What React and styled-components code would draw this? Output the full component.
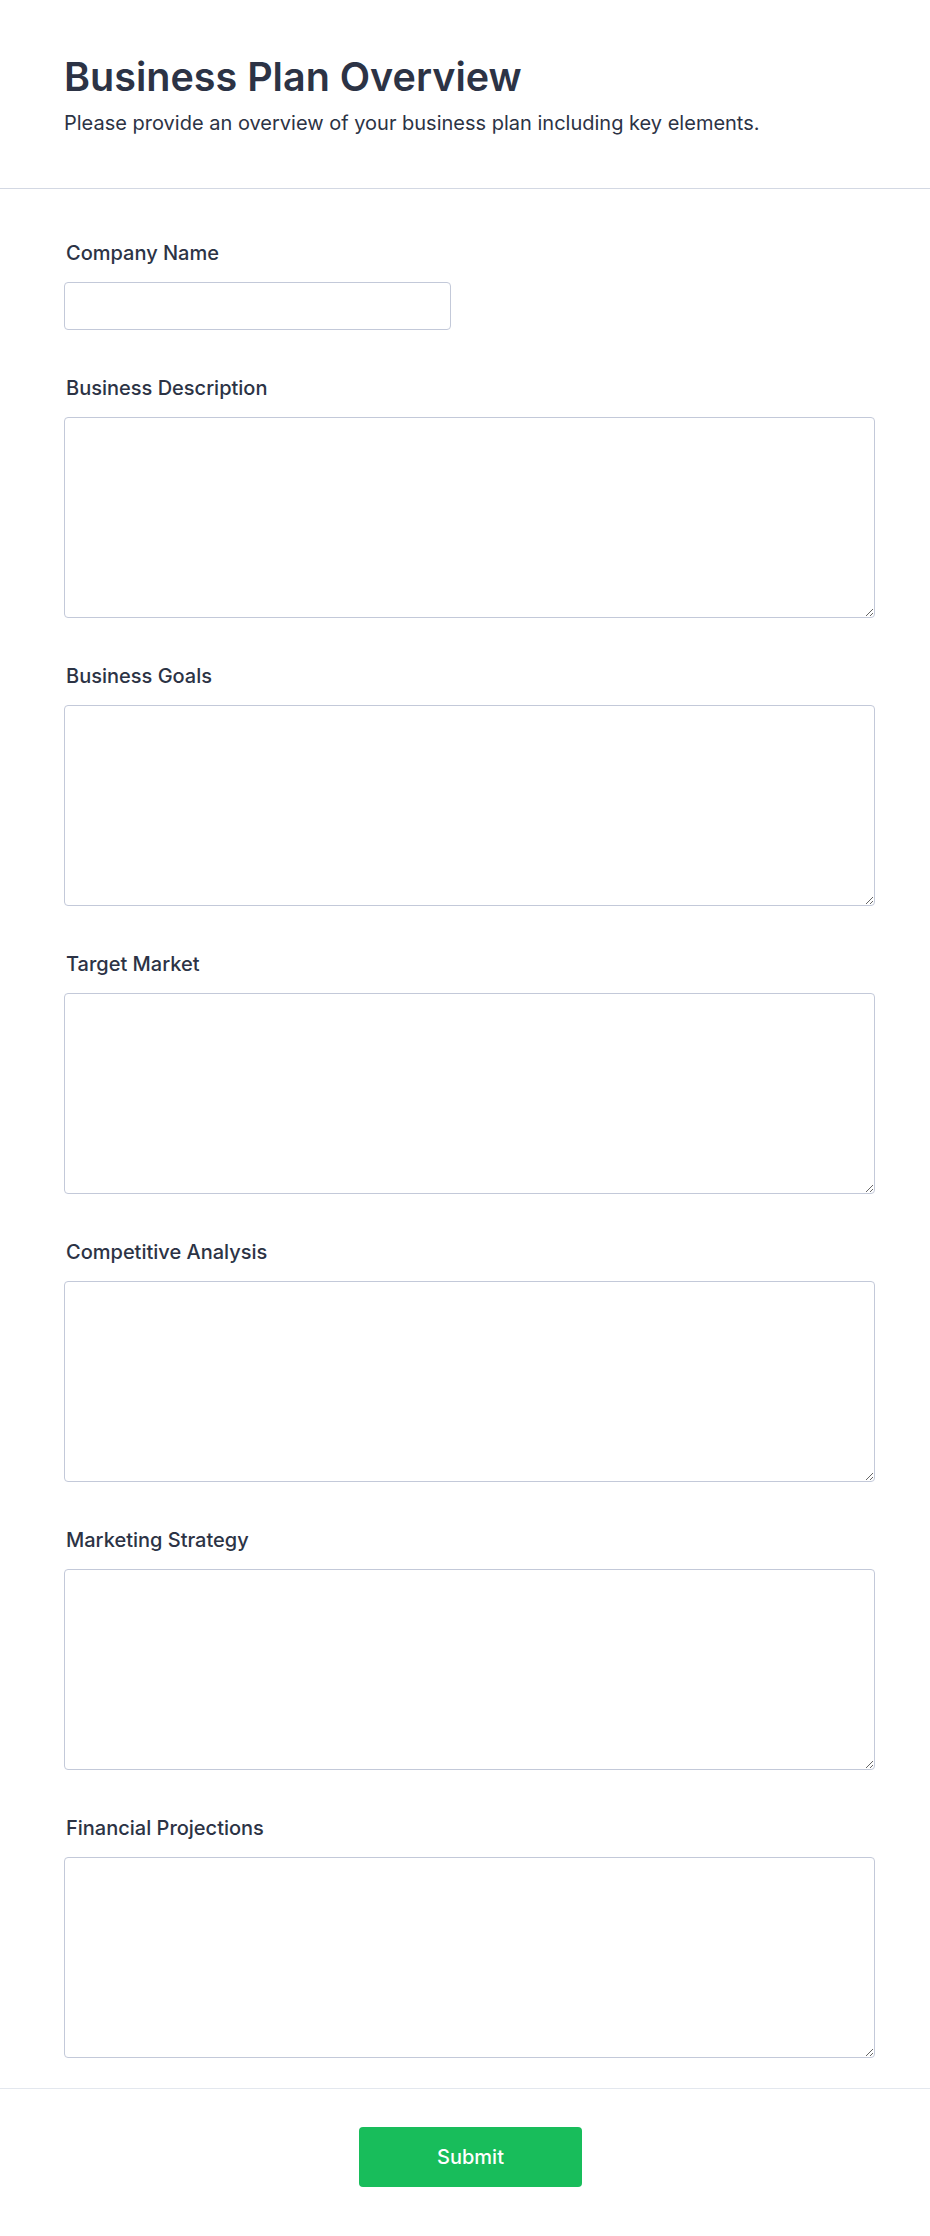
import React from "react";
import styled, { createGlobalStyle } from "styled-components";

const fields = [
  "Business Description",
  "Business Goals",
  "Target Market",
  "Competitive Analysis",
  "Marketing Strategy",
  "Financial Projections",
];

const App = () => {
  return (
    <>
      <GlobalStyle />
      <Page>
        <Header>
          <Title>Business Plan Overview</Title>
          <Subtitle>Please provide an overview of your business plan including key elements.</Subtitle>
        </Header>
        <Form>
          <Field>
            <Label htmlFor="company">Company Name</Label>
            <Input id="company" type="text" />
          </Field>
          {fields.map((name) => (
            <Field key={name}>
              <Label htmlFor={name}>{name}</Label>
              <TextArea id={name} />
            </Field>
          ))}
        </Form>
        <Footer>
          <SubmitButton type="button">Submit</SubmitButton>
        </Footer>
      </Page>
    </>
  );
};

export default App;

const GlobalStyle = createGlobalStyle`
  * {
    box-sizing: border-box;
  }

  body {
    margin: 0;
    background: #ffffff;
    font-family: Inter, "Noto Sans", sans-serif;
    color: #2c3345;
  }
`;

const Page = styled.div`
  width: 100%;
  min-height: 2236px;
  background: #ffffff;
`;

const Header = styled.header`
  padding: 53px 64px 50px;
  border-bottom: 1px solid #d3d8e3;
`;

const Title = styled.h1`
  margin: 0 0 7px;
  font-size: 39.5px;
  line-height: 48px;
  font-weight: 600;
  color: #2c3345;
`;

const Subtitle = styled.p`
  margin: 0;
  font-size: 20px;
  line-height: 30px;
  color: #2c3345;
`;

const Form = styled.form`
  display: flex;
  flex-direction: column;
  gap: 45px;
  padding: 51px 55px 30px 64px;
`;

const Field = styled.div`
  display: flex;
  flex-direction: column;
  align-items: flex-start;
  gap: 15px;
`;

const Label = styled.label`
  padding-left: 2px;
  font-size: 20px;
  line-height: 27px;
  font-weight: 450;
  color: #2c3345;
`;

const Input = styled.input`
  width: 387px;
  height: 48px;
  padding: 0 12px;
  border: 1px solid #c3c9d9;
  border-radius: 4px;
  background: #ffffff;
  font-family: inherit;
  font-size: 16px;
  outline: none;
`;

const TextArea = styled.textarea`
  width: 100%;
  height: 201px;
  padding: 10px 12px;
  border: 1px solid #c3c9d9;
  border-radius: 4px;
  background: #ffffff;
  font-family: inherit;
  font-size: 16px;
  outline: none;
  resize: vertical;
`;

const Footer = styled.div`
  display: flex;
  justify-content: center;
  padding: 38px 0 48px 11px;
  border-top: 1px solid #e3e7ee;
`;

const SubmitButton = styled.button`
  width: 223px;
  height: 60px;
  border: none;
  border-radius: 4px;
  background: #18bd5b;
  color: #ffffff;
  font-family: Inter, "Noto Sans", sans-serif;
  font-size: 20px;
  font-weight: 450;
  cursor: pointer;
`;
